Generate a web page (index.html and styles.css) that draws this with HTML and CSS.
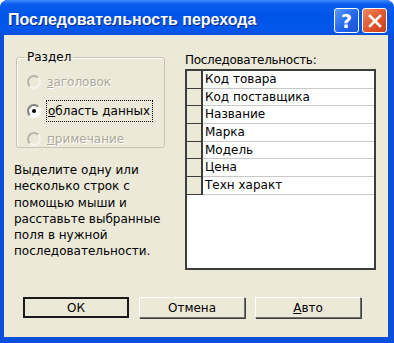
FILE: index.html
```html
<!DOCTYPE html>
<html lang="ru">
<head>
<meta charset="UTF-8">
<title>Последовательность перехода</title>
<link rel="stylesheet" href="styles.css">
</head>
<body>

<div class="window">
    <div class="titlebar">
        <span class="title">Последовательность перехода</span>
        <div class="caption-buttons">
            <span class="cap help">?</span>
            <span class="cap close">
                <svg width="14" height="14" viewBox="0 0 14 14"><path d="M2 2 L12 12 M12 2 L2 12" stroke="#fff" stroke-width="2.6" stroke-linecap="square"/></svg>
            </span>
        </div>
    </div>

    <div class="client">
        <div class="content">
            <div class="left">
                <fieldset class="group">
                    <legend>Раздел</legend>
                    <div class="radio disabled"><span class="dot"></span><span class="label"><u>з</u>аголовок</span></div>
                    <div class="radio checked"><span class="dot"></span><span class="label focus"><u>о</u>бласть данных</span></div>
                    <div class="radio disabled"><span class="dot"></span><span class="label"><u>п</u>римечание</span></div>
                </fieldset>
                <p class="hint">Выделите одну или несколько строк с помощью мыши и расставьте выбранные поля в нужной последовательности.</p>
            </div>

            <div class="right">
                <div class="list-label">Последовательность:</div>
                <div class="list">
                    <div class="row"><span class="sel"></span><span class="cell">Код товара</span></div>
                    <div class="row"><span class="sel"></span><span class="cell">Код поставщика</span></div>
                    <div class="row"><span class="sel"></span><span class="cell">Название</span></div>
                    <div class="row"><span class="sel"></span><span class="cell">Марка</span></div>
                    <div class="row"><span class="sel"></span><span class="cell">Модель</span></div>
                    <div class="row"><span class="sel"></span><span class="cell">Цена</span></div>
                    <div class="row"><span class="sel"></span><span class="cell">Техн характ</span></div>
                </div>
            </div>
        </div>

        <div class="buttons">
            <button class="btn default">ОК</button>
            <button class="btn">Отмена</button>
            <button class="btn"><u>А</u>вто</button>
        </div>
    </div>
</div>

</body>
</html>
```
FILE: styles.css
```css
/* XP style dialog */
body {
    margin: 0;
    background: #fff;
    font-family: "DejaVu Sans", Verdana, sans-serif;
    font-size: 12px;
}

.window {
    width: 394px;
    height: 343px;
    box-sizing: border-box;
    background: #0a4fdc;
    border-radius: 8px 8px 0 0;
    padding: 0 6px 6px 4px;
    display: flex;
    flex-direction: column;
}

.titlebar {
    height: 35px;
    margin: 0 -6px 0 -4px;
    padding: 0 7px 0 8px;
    border-radius: 8px 8px 0 0;
    background: linear-gradient(#3d8dff 0%, #0a5cf0 12%, #0055e8 45%, #0258ec 85%, #0a4fdc 100%);
    display: flex;
    align-items: center;
}

.title {
    flex: 1;
    color: #fff;
    font-family: "Liberation Sans", Arial, sans-serif;
    font-weight: bold;
    font-size: 16px;
    text-shadow: 1px 1px 0 #0a2a8a;
    padding-top: 4px;
}

.caption-buttons {
    display: flex;
    gap: 3px;
    padding-top: 6px;
}

.cap {
    width: 23px;
    height: 23px;
    border: 1px solid #fff;
    border-radius: 3px;
    display: flex;
    align-items: center;
    justify-content: center;
    color: #fff;
}

.help {
    background: linear-gradient(135deg, #5b9bff, #1f62e8 60%, #1a55d0);
    font-family: "DejaVu Sans", sans-serif;
    font-weight: bold;
    font-size: 19px;
}

.close {
    background: linear-gradient(135deg, #f08a62, #e0542a 55%, #c8401c);
}

.client {
    flex: 1;
    background: #ece9d8;
    color: #000;
}

.content {
    display: flex;
    height: 235px;
}

.left {
    width: 170px;
}

.group {
    margin: 15px 0 0 12px;
    width: 149px;
    height: 98px;
    box-sizing: border-box;
    padding: 3px 0 0 10px;
    border: 1px solid #c7c4b4;
    border-radius: 3px;
    box-shadow: inset 1px 1px 0 #fff;
}

.group legend {
    padding: 0 2px;
    margin-left: -2px;
    line-height: 15px;
}

.radio {
    height: 28.5px;
    display: flex;
    align-items: center;
    gap: 6px;
}

.dot {
    width: 10px;
    height: 10px;
    border-radius: 50%;
    border: 2px solid;
    border-color: #808080 #fff #fff #808080;
    display: flex;
    align-items: center;
    justify-content: center;
}

.radio.disabled .dot {
    border-color: #b8b5a6 #f6f5ee #f6f5ee #b8b5a6;
}

.radio.disabled .label {
    color: #aca899;
    text-shadow: 1px 1px 0 #fff;
}

.radio.checked .dot {
    background: #fff;
}

.radio.checked .dot::after {
    content: "";
    width: 4px;
    height: 4px;
    border-radius: 50%;
    background: #000;
}

.label.focus {
    outline: 1px dotted #000;
    padding: 3px 2px 3px 1px;
}

.hint {
    margin: 14px 0 0 10px;
    line-height: 16.3px;
    width: 165px;
}

.right {
    margin-left: 11px;
    padding-top: 18px;
}

.list-label {
    line-height: 15px;
    margin-bottom: 1px;
    letter-spacing: -0.3px;
}

.list {
    width: 191px;
    height: 201px;
    box-sizing: border-box;
    border: 2px solid #3c3c3c;
    background: #fff;
}

.row {
    display: flex;
    height: 17.7px;
}

.sel {
    width: 14px;
    background: #ece9d8;
    border-right: 2px solid #3c3c3c;
    border-bottom: 1px solid #3c3c3c;
}

.cell {
    flex: 1;
    border-bottom: 1px solid #c8c8c8;
    padding-left: 2px;
    line-height: 17px;
    white-space: nowrap;
}

.buttons {
    display: flex;
    gap: 10px;
    padding: 27px 0 0 19px;
}

.btn {
    width: 106px;
    height: 21px;
    font-family: "DejaVu Sans", Verdana, sans-serif;
    font-size: 12px;
    background: #ece9d8;
    border: 1px solid;
    border-color: #fff #6f6f6f #6f6f6f #fff;
    box-shadow: 1px 1px 0 #404040;
    padding: 0;
}

.btn.default {
    border: 2px solid #1a1a1a;
    box-shadow: none;
}
```
